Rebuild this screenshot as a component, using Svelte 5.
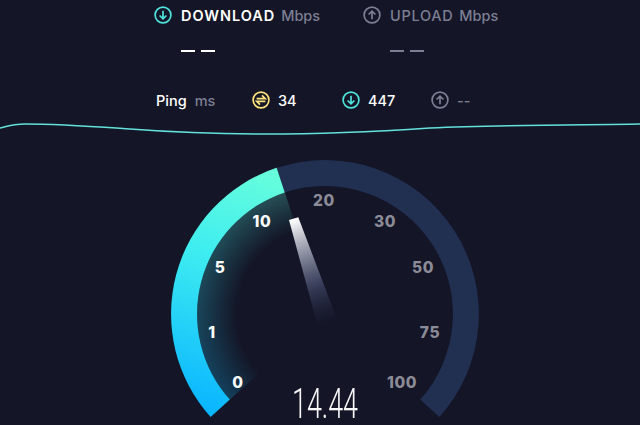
<script>
  const ticks = [
    { label: "0", x: 238, y: 382, on: true },
    { label: "1", x: 212, y: 332, on: true },
    { label: "5", x: 220, y: 267, on: true },
    { label: "10", x: 262, y: 221, on: true },
    { label: "20", x: 324, y: 200, on: false },
    { label: "30", x: 385, y: 221, on: false },
    { label: "50", x: 423, y: 267, on: false },
    { label: "75", x: 430, y: 332, on: false },
    { label: "100", x: 402, y: 382, on: false },
  ];
</script>

{#snippet arrow(kind)}
  <svg class="icon {kind}" viewBox="0 0 18 18" width="18" height="18">
    <circle cx="9" cy="9" r="7.9" />
    {#if kind === "down"}
      <path d="M9 4.8v8M5.6 9.5 9 12.9l3.4-3.4" />
    {:else if kind === "up"}
      <path d="M9 13.2v-8M5.6 8.5 9 5.1l3.4 3.4" />
    {:else}
      <path d="M4.6 7.6h8.6L10 4.4M13.4 10.4H4.8L8 13.6" />
    {/if}
  </svg>
{/snippet}

<main class="page">
  <section class="speeds">
    <div class="speed">
      <div class="head">
        {@render arrow("down")}
        <span class="title on">DOWNLOAD</span>
        <span class="unit">Mbps</span>
      </div>
      <div class="dashes on"><i></i><i></i></div>
    </div>
    <div class="speed">
      <div class="head">
        {@render arrow("up")}
        <span class="title">UPLOAD</span>
        <span class="unit">Mbps</span>
      </div>
      <div class="dashes"><i></i><i></i></div>
    </div>
  </section>

  <section class="ping">
    <div class="ping-label"><span class="name">Ping</span><span class="ms">ms</span></div>
    <div class="stat s1">{@render arrow("jitter")}<span>34</span></div>
    <div class="stat s2">{@render arrow("down")}<span>447</span></div>
    <div class="stat s3">{@render arrow("up")}<span class="none">--</span></div>
  </section>

  <svg class="graph" viewBox="0 0 640 24" width="640" height="24">
    <path d="M0 16C8 14 14 12 25 12 60 12 100 15 130 17 170 20 220 22 265 22 310 22 370 20 430 16 500 13 580 13 640 12" />
  </svg>

  <svg class="gauge" viewBox="0 140 640 285" width="640" height="285">
    <defs>
      <linearGradient id="fill" gradientUnits="userSpaceOnUse" x1="290" y1="170" x2="215" y2="417">
        <stop offset="0" stop-color="#6affda" />
        <stop offset="0.4" stop-color="#3eedf0" />
        <stop offset="1" stop-color="#09b4ff" />
      </linearGradient>
      <radialGradient id="fade" gradientUnits="userSpaceOnUse" cx="325" cy="314" r="128">
        <stop offset="0.68" stop-color="#000" />
        <stop offset="1" stop-color="#fff" />
      </radialGradient>
      <mask id="glow-mask" maskUnits="userSpaceOnUse" x="0" y="140" width="640" height="285">
        <rect x="0" y="140" width="640" height="285" fill="url(#fade)" />
      </mask>
      <linearGradient id="needle" gradientUnits="userSpaceOnUse" x1="294" y1="219" x2="328" y2="325">
        <stop offset="0" stop-color="#fff" />
        <stop offset="0.6" stop-color="#4c5373" stop-opacity="0.75" />
        <stop offset="1" stop-color="#232a48" stop-opacity="0" />
      </linearGradient>
    </defs>

    <path class="track" d="M276.6 167.8A154 154 0 0 1 439.4 417L420.1 399.6A128 128 0 0 0 284.8 192.5Z" />
    <path fill="url(#fill)" d="M210.6 417A154 154 0 0 1 276.6 167.8L284.8 192.5A128 128 0 0 0 229.9 399.6Z" />
    <path fill="url(#fill)" opacity="0.25" mask="url(#glow-mask)" d="M229.9 399.6A128 128 0 0 1 284.8 192.5L325 314Z" />
    <path fill="url(#needle)" d="M289 220 298.3 217.3 338 322 318 327Z" />

    {#each ticks as t}
      <text class="tick" class:on={t.on} x={t.x} y={t.y + 5.5} text-anchor="middle">{t.label}</text>
    {/each}
    <text class="value" x="325" y="418" text-anchor="middle" textLength="66" lengthAdjust="spacingAndGlyphs">14.44</text>
  </svg>
</main>

<style>
  :global(body) {
    margin: 0;
    background: #141526;
  }

  .page {
    width: 640px;
    height: 425px;
    overflow: hidden;
    background: #141526;
    font-family: Inter, "Liberation Sans", sans-serif;
    color: #fff;
  }

  .speeds {
    display: grid;
    grid-template-columns: 209px auto;
    height: 88px;
    padding: 6px 0 0 154px;
    box-sizing: border-box;
  }

  .head {
    display: flex;
    align-items: center;
    height: 18px;
    font-size: 14.5px;
    font-weight: 500;
    color: #7c7f94;
  }

  .title {
    margin-left: 9px;
    margin-right: 6px;
    letter-spacing: 0.7px;
  }
  .title.on {
    color: #fff;
    font-weight: 600;
    letter-spacing: 0.95px;
  }

  .dashes {
    display: flex;
    gap: 6px;
    margin: 26px 0 0 27px;
  }
  .dashes i {
    width: 14px;
    height: 2px;
    background: #7c7f94;
  }
  .dashes.on i {
    background: #fff;
  }

  .ping {
    display: flex;
    align-items: center;
    height: 24px;
    padding-left: 156px;
    font-size: 14.5px;
    font-weight: 500;
  }
  .ping-label {
    display: flex;
    gap: 8px;
    width: 96px;
  }
  .ms {
    color: #7c7f94;
  }
  .stat {
    display: flex;
    align-items: center;
    gap: 8px;
    width: 90px;
  }
  .s2 {
    width: 89px;
  }
  .none {
    color: #7c7f94;
  }

  .icon {
    flex: none;
    fill: none;
    stroke-width: 1.7;
  }
  .icon.down {
    stroke: #4ee3dc;
  }
  .icon.up {
    stroke: #7c7f94;
  }
  .icon.jitter {
    stroke: #ffe27a;
  }

  .graph {
    display: block;
  }
  .graph path {
    fill: none;
    stroke: #63e2dc;
    stroke-width: 1.6;
  }

  .gauge {
    display: block;
    margin-top: 4px;
  }
  .track {
    fill: #212f51;
  }
  .tick {
    font-size: 15.5px;
    font-weight: 800;
    letter-spacing: 0.6px;
    fill: #8c8c98;
  }
  .tick.on {
    fill: #fff;
  }
  .value {
    font-family: Roboto, sans-serif;
    font-size: 42px;
    font-weight: 300;
    fill: #fff;
    opacity: 0.97;
  }
</style>
